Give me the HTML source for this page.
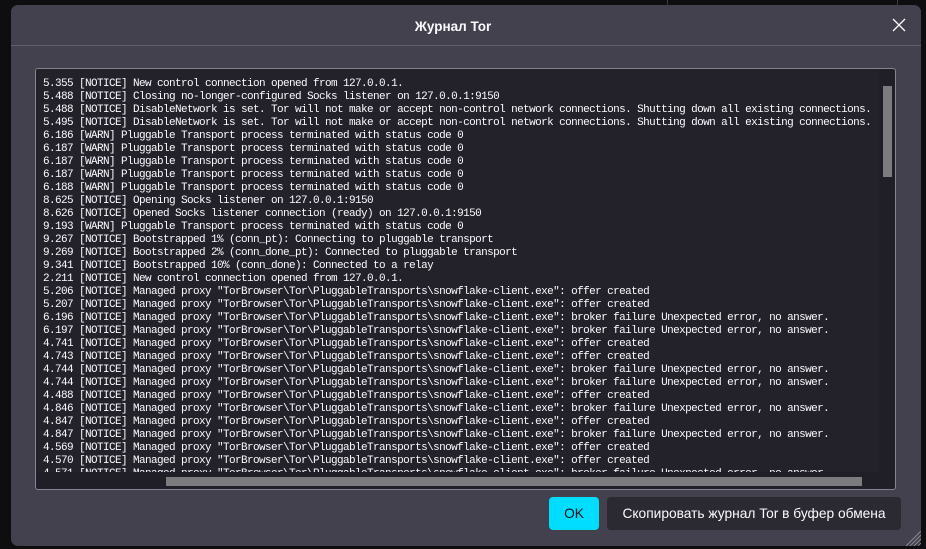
<!DOCTYPE html>
<html lang="ru"><head><meta charset="utf-8"><title>Журнал Tor</title>
<style>
html,body{margin:0;padding:0;width:926px;height:549px;overflow:hidden;background:#0e0e11}
.a{position:absolute}
#d{left:11px;top:5px;width:910px;height:541px;background:#42414d;border-radius:7px;overflow:hidden}
#hl{left:0;top:40px;width:910px;height:1px;background:#5f5e6a}
#t{left:0;width:884px;top:13px;text-align:center;font:bold 13.5px/17px "Liberation Sans",sans-serif;color:#fbfbfe}
#log{left:35px;top:68px;width:859px;height:420px;border:1px solid #85848f;border-radius:3px;background:#201f27;overflow:hidden}
#txt{left:0;top:0;width:843px;height:403px;background:#23222b;overflow:hidden}
pre{position:absolute;left:7px;top:9px;margin:0;font:11px/13px "Liberation Mono",monospace;letter-spacing:-.6px;color:#fbfbfe;white-space:pre}
.b{top:497px;height:33px;border-radius:4px;font:13.75px/33px "Liberation Sans",sans-serif;text-align:center}
</style></head><body>
<div class="a" style="left:667px;top:0;width:1px;height:5px;background:#3a3a40"></div>
<div class="a" style="left:897px;top:0;width:1px;height:5px;background:#3a3a40"></div>
<div class="a" id="d"><div class="a" id="t">Журнал Tor</div><div class="a" id="hl"></div></div>
<svg class="a" style="left:892px;top:18px" width="14" height="14" viewBox="0 0 14 14"><path d="M1 1L13 13M13 1L1 13" stroke="#fbfbfe" stroke-width="1.3" fill="none"/></svg>
<div class="a" id="log"><div class="a" id="txt"><pre>5.355 [NOTICE] New control connection opened from 127.0.0.1.
5.488 [NOTICE] Closing no-longer-configured Socks listener on 127.0.0.1:9150
5.488 [NOTICE] DisableNetwork is set. Tor will not make or accept non-control network connections. Shutting down all existing connections.
5.495 [NOTICE] DisableNetwork is set. Tor will not make or accept non-control network connections. Shutting down all existing connections.
6.186 [WARN] Pluggable Transport process terminated with status code 0
6.187 [WARN] Pluggable Transport process terminated with status code 0
6.187 [WARN] Pluggable Transport process terminated with status code 0
6.187 [WARN] Pluggable Transport process terminated with status code 0
6.188 [WARN] Pluggable Transport process terminated with status code 0
8.625 [NOTICE] Opening Socks listener on 127.0.0.1:9150
8.626 [NOTICE] Opened Socks listener connection (ready) on 127.0.0.1:9150
9.193 [WARN] Pluggable Transport process terminated with status code 0
9.267 [NOTICE] Bootstrapped 1% (conn_pt): Connecting to pluggable transport
9.269 [NOTICE] Bootstrapped 2% (conn_done_pt): Connected to pluggable transport
9.341 [NOTICE] Bootstrapped 10% (conn_done): Connected to a relay
2.211 [NOTICE] New control connection opened from 127.0.0.1.
5.206 [NOTICE] Managed proxy "TorBrowser\Tor\PluggableTransports\snowflake-client.exe": offer created
5.207 [NOTICE] Managed proxy "TorBrowser\Tor\PluggableTransports\snowflake-client.exe": offer created
6.196 [NOTICE] Managed proxy "TorBrowser\Tor\PluggableTransports\snowflake-client.exe": broker failure Unexpected error, no answer.
6.197 [NOTICE] Managed proxy "TorBrowser\Tor\PluggableTransports\snowflake-client.exe": broker failure Unexpected error, no answer.
4.741 [NOTICE] Managed proxy "TorBrowser\Tor\PluggableTransports\snowflake-client.exe": offer created
4.743 [NOTICE] Managed proxy "TorBrowser\Tor\PluggableTransports\snowflake-client.exe": offer created
4.744 [NOTICE] Managed proxy "TorBrowser\Tor\PluggableTransports\snowflake-client.exe": broker failure Unexpected error, no answer.
4.744 [NOTICE] Managed proxy "TorBrowser\Tor\PluggableTransports\snowflake-client.exe": broker failure Unexpected error, no answer.
4.488 [NOTICE] Managed proxy "TorBrowser\Tor\PluggableTransports\snowflake-client.exe": offer created
4.846 [NOTICE] Managed proxy "TorBrowser\Tor\PluggableTransports\snowflake-client.exe": broker failure Unexpected error, no answer.
4.847 [NOTICE] Managed proxy "TorBrowser\Tor\PluggableTransports\snowflake-client.exe": offer created
4.847 [NOTICE] Managed proxy "TorBrowser\Tor\PluggableTransports\snowflake-client.exe": broker failure Unexpected error, no answer.
4.569 [NOTICE] Managed proxy "TorBrowser\Tor\PluggableTransports\snowflake-client.exe": offer created
4.570 [NOTICE] Managed proxy "TorBrowser\Tor\PluggableTransports\snowflake-client.exe": offer created
4.571 [NOTICE] Managed proxy "TorBrowser\Tor\PluggableTransports\snowflake-client.exe": broker failure Unexpected error, no answer.</pre></div>
<div class="a" style="left:847px;top:17px;width:9px;height:91px;background:#7c7c7f"></div>
<div class="a" style="left:130px;top:408px;width:696px;height:9px;background:#7c7c7f"></div>
</div>
<div class="a b" style="left:549px;width:50px;background:#00ddff;color:#15141a">OK</div>
<div class="a b" style="left:607px;width:294px;background:#2b2a33;color:#fbfbfe">Скопировать журнал Tor в буфер обмена</div>
<svg class="a" style="left:906px;top:531px" width="15" height="15" viewBox="0 0 15 15"><path d="M15 0L0 15M15 4L4 15M15 8L8 15M15 12L12 15" stroke="#8a8a94" stroke-width="1" fill="none"/></svg>
</body></html>
